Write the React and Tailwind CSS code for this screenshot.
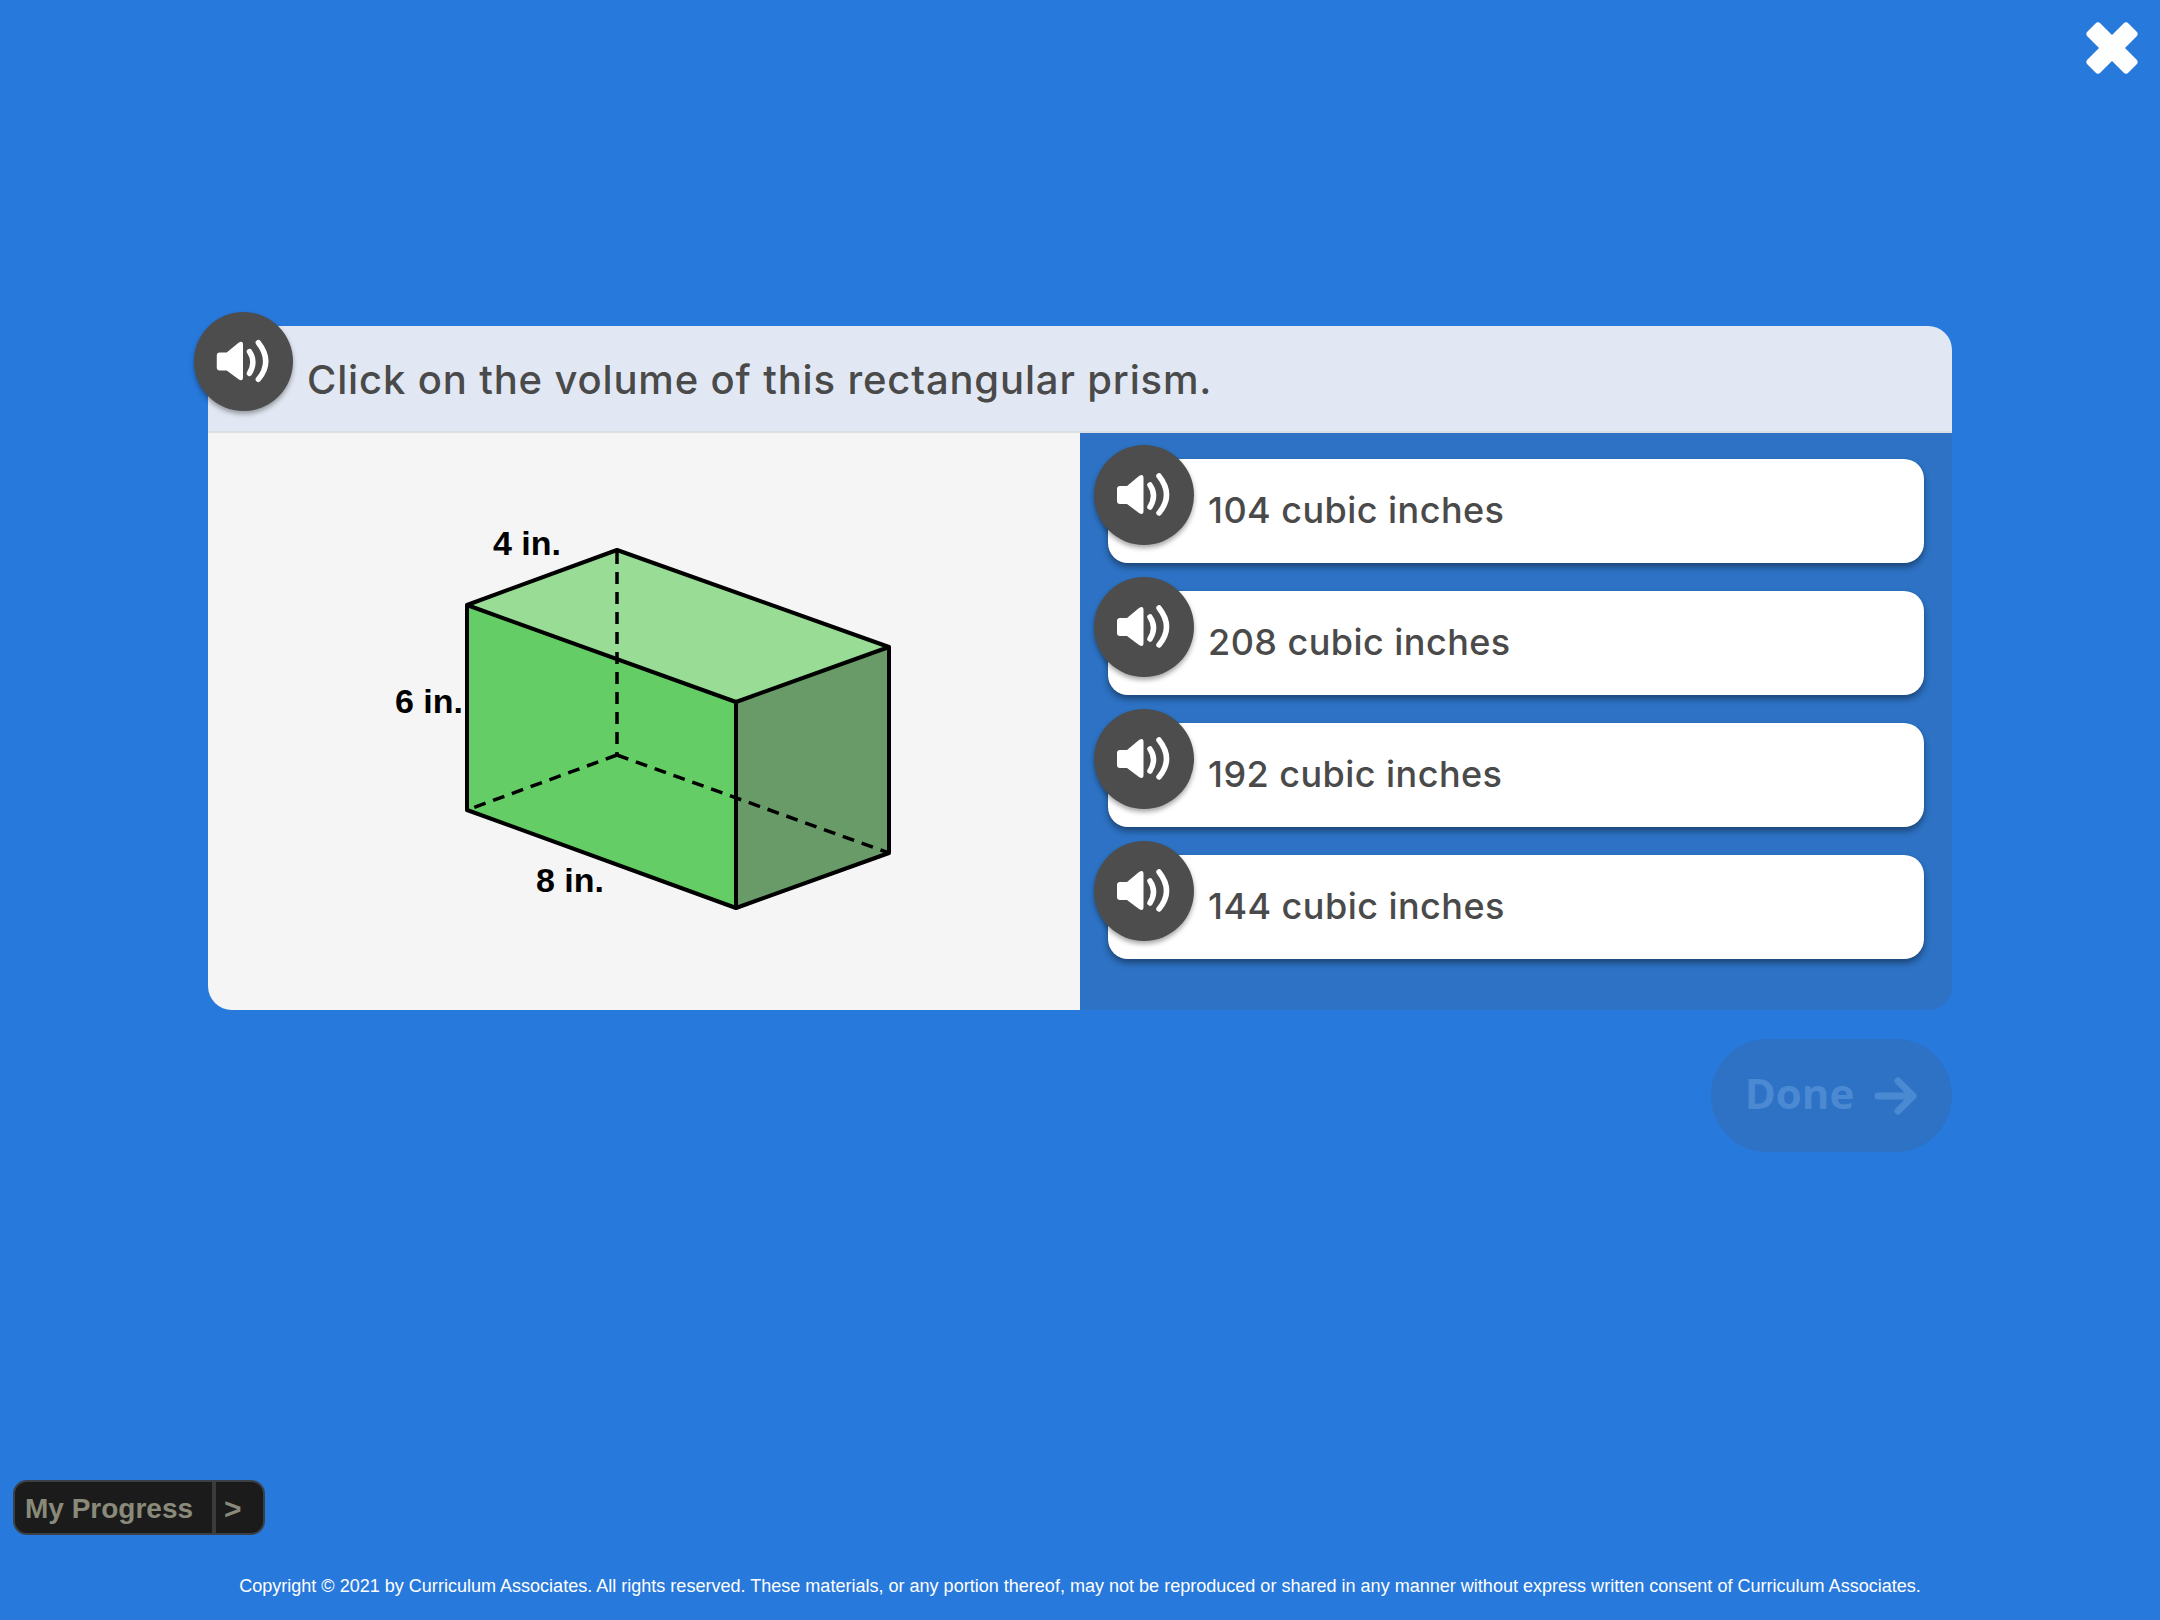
import React from 'react';

const answers = ['104 cubic inches', '208 cubic inches', '192 cubic inches', '144 cubic inches'];

const AudioButton = ({ className }) => (
  <button className={`absolute rounded-full bg-[#4d4d4d] shadow-[0_3px_5px_rgba(0,0,0,0.35)] ${className}`}>
    <svg viewBox="0 0 100 100" className="w-full h-full">
      <path d="M26 41 H33 L45 31 Q49.500 28.500 49.500 33 V66 Q49.500 70.500 45 68 L33 59 H26 Q23 59 23 56 V44 Q23 41 26 41 Z" fill="#fff" />
      <path d="M56 40 Q63 50.500 56 62" fill="none" stroke="#fff" strokeWidth="5.500" strokeLinecap="round" />
      <path d="M65 31 Q80 50 65 68" fill="none" stroke="#fff" strokeWidth="5.500" strokeLinecap="round" />
    </svg>
  </button>
);

const Prism = () => (
  <svg viewBox="208 433 872 577" className="w-full h-full">
    <polygon points="467,605 617,550 889,647 736,702" fill="#98dc95" />
    <polygon points="467,605 736,702 736,908 467,810" fill="#65cd66" />
    <polygon points="736,702 889,647 889,853 736,908" fill="#699b68" />
    <g fill="none" stroke="#000" strokeWidth="3.500" strokeDasharray="12 8">
      <path d="M617 552 V755" />
      <path d="M617 755 L467 810" />
      <path d="M617 755 L889 853" />
    </g>
    <path
      d="M467 605 L617 550 L889 647 L736 702 Z M467 605 V810 L736 908 L889 853 V647 M736 702 V908"
      fill="none"
      stroke="#000"
      strokeWidth="4"
      strokeLinejoin="round"
    />
    <g fontFamily="'Liberation Sans', sans-serif" fontWeight="700" fontSize="34" fill="#000">
      <text x="493" y="555">4 in.</text>
      <text x="395" y="713">6 in.</text>
      <text x="536" y="892">8 in.</text>
    </g>
  </svg>
);

export default function App() {
  return (
    <div className="relative flex flex-col h-[1620px] bg-[#2879dc] overflow-hidden font-['Inter',sans-serif]">
      {/* Close */}
      <button className="absolute top-[20px] right-[20px] w-[56px] h-[56px]">
        <svg viewBox="0 0 56 56" className="w-full h-full">
          <polygon
            points="28,20 42,6 50,14 36,28 50,42 42,50 28,36 14,50 6,42 20,28 6,14 14,6"
            fill="#fff"
            stroke="#fff"
            strokeWidth="7"
            strokeLinejoin="round"
          />
        </svg>
      </button>

      <div className="mt-[326px] mx-[208px]">
        {/* Question */}
        <div className="relative h-[107px] pl-[99px] pt-[26px] bg-[#e2e8f3] border-b-2 border-[#dcdfe4] rounded-t-[24px]">
          <AudioButton className="w-[99px] h-[99px] -top-[14px] -left-[14px]" />
          <p className="text-[40px] leading-[56px] tracking-[0.85px] font-medium text-[#4a4a4a]">
            Click on the volume of this rectangular prism.
          </p>
        </div>

        <div className="flex h-[577px]">
          <div className="w-[872px] bg-[#f5f5f5] rounded-bl-[24px]">
            <Prism />
          </div>
          <div className="flex-1 flex flex-col gap-[28px] pt-[26px] px-[28px] bg-[#2d72c4] rounded-br-[24px]">
            {answers.map((answer) => (
              <div
                key={answer}
                className="relative h-[104px] pl-[100px] pb-[2px] flex items-center bg-white rounded-[20px] shadow-[0_4px_6px_rgba(0,0,0,0.4)]"
              >
                <AudioButton className="w-[100px] h-[100px] -top-[14px] -left-[14px]" />
                <span className="text-[36px] tracking-[0.45px] font-medium text-[#4a4a4a]">{answer}</span>
              </div>
            ))}
          </div>
        </div>

        {/* Done */}
        <div className="flex justify-end mt-[29px]">
          <button className="w-[241px] h-[113px] flex items-center justify-center gap-[20px] rounded-full bg-[#2d72c4] text-[#4b89d3] font-['Open_Sans',sans-serif] font-bold text-[42px]">
            <span className="mb-[6px]">Done</span>
            <svg viewBox="0 0 44 38" className="w-[44px] h-[38px]">
              <path d="M4 19 H39 M24 4 L39 19 L24 34" fill="none" stroke="#4b89d3" strokeWidth="7" strokeLinecap="round" strokeLinejoin="round" />
            </svg>
          </button>
        </div>
      </div>

      {/* Progress */}
      <div className="mt-auto ml-[13px] flex w-[252px] h-[55px] bg-[#1b1b1b] border-2 border-[#3b4048] rounded-[14px] text-[#8a8a7a] font-['Liberation_Sans',sans-serif] font-bold text-[28px]">
        <span className="w-[201px] pl-[10px] leading-[53px] border-r-4 border-[#3b3b3b]">My Progress</span>
        <span className="pl-[8px] leading-[53px] text-[30px]">&gt;</span>
      </div>

      <footer className="h-[85px] pt-[39px] text-center text-white text-[18.05px] leading-[24px] font-['Liberation_Sans',sans-serif]">
        Copyright © 2021 by Curriculum Associates. All rights reserved. These materials, or any portion thereof, may not be reproduced or shared in any manner without express written consent of Curriculum Associates.
      </footer>
    </div>
  );
}
